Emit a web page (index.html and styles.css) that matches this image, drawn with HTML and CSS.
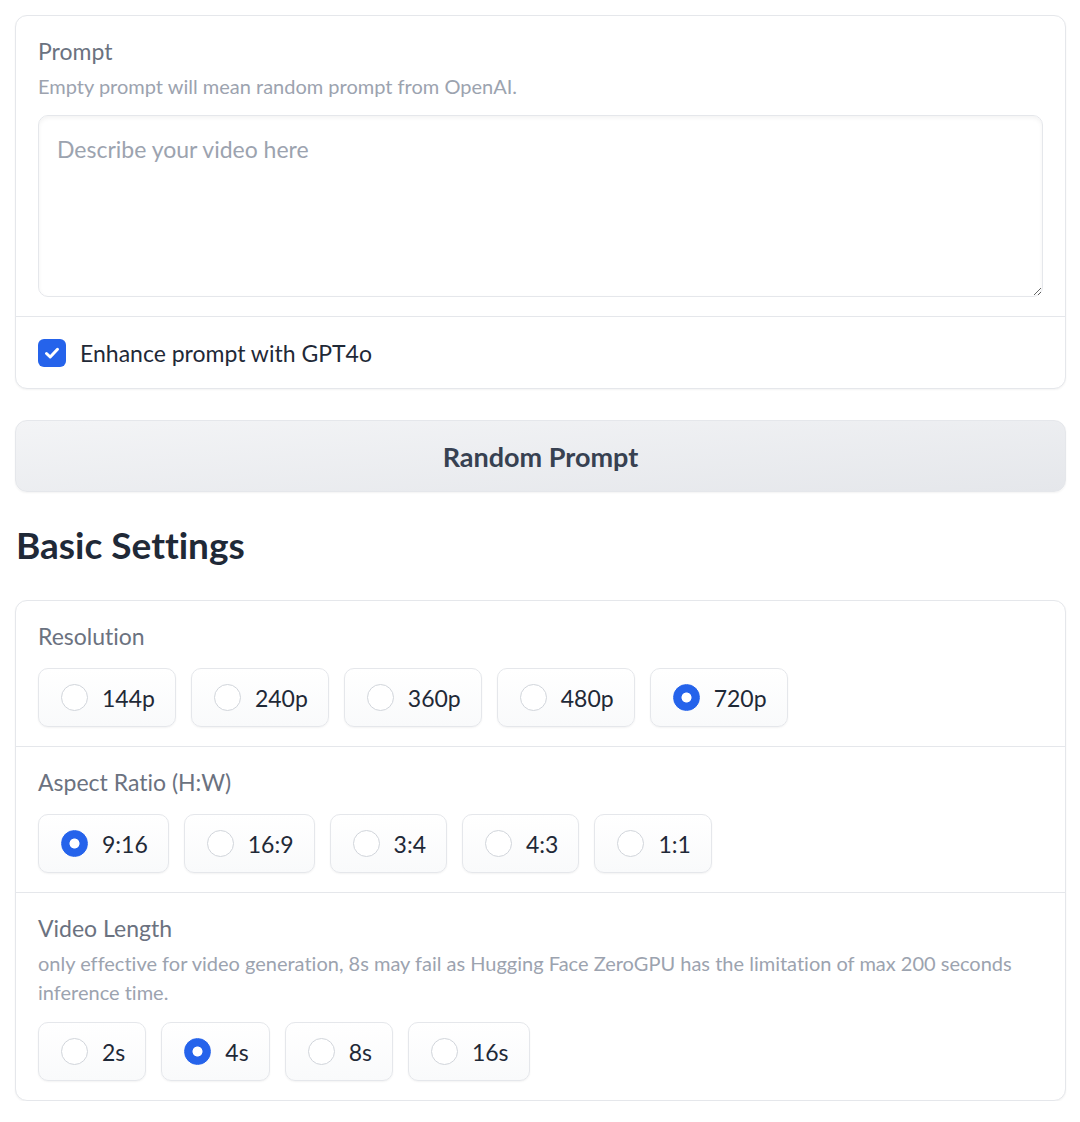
FILE: index.html
```html
<!DOCTYPE html>
<html lang="en">
<head>
<meta charset="utf-8">
<title>Video settings</title>
<link rel="stylesheet" href="styles.css">
</head>
<body>
<div class="page">
  <div class="card">
    <div class="block">
      <div class="label">Prompt</div>
      <div class="info">Empty prompt will mean random prompt from OpenAI.</div>
      <textarea class="prompt-input" placeholder="Describe your video here"></textarea>
    </div>
    <div class="block check-block">
      <label class="check">
        <span class="box">
          <svg width="28" height="28" viewBox="0 0 28 28"><path d="M8.5 14.5 L12.2 18 L19.5 10.3" fill="none" stroke="#fff" stroke-width="3" stroke-linecap="round" stroke-linejoin="round"/></svg>
        </span>
        <span class="check-text">Enhance prompt with GPT4o</span>
      </label>
    </div>
  </div>

  <button class="btn">Random Prompt</button>

  <h2 class="heading">Basic Settings</h2>

  <div class="card">
    <div class="block">
      <div class="label">Resolution</div>
      <div class="options">
        <label class="opt"><span class="radio"></span>144p</label>
        <label class="opt"><span class="radio"></span>240p</label>
        <label class="opt"><span class="radio"></span>360p</label>
        <label class="opt"><span class="radio"></span>480p</label>
        <label class="opt"><span class="radio on"></span>720p</label>
      </div>
    </div>
    <div class="block">
      <div class="label">Aspect Ratio (H:W)</div>
      <div class="options">
        <label class="opt"><span class="radio on"></span>9:16</label>
        <label class="opt"><span class="radio"></span>16:9</label>
        <label class="opt"><span class="radio"></span>3:4</label>
        <label class="opt"><span class="radio"></span>4:3</label>
        <label class="opt"><span class="radio"></span>1:1</label>
      </div>
    </div>
    <div class="block">
      <div class="label">Video Length</div>
      <div class="info">only effective for video generation, 8s may fail as Hugging Face ZeroGPU has the limitation of max 200 seconds inference time.</div>
      <div class="options">
        <label class="opt"><span class="radio"></span>2s</label>
        <label class="opt"><span class="radio on"></span>4s</label>
        <label class="opt"><span class="radio"></span>8s</label>
        <label class="opt"><span class="radio"></span>16s</label>
      </div>
    </div>
  </div>
</div>
</body>
</html>
```

FILE: styles.css
```css
* { box-sizing: border-box; }

html, body {
  margin: 0;
  background: #ffffff;
}

body {
  font-family: "Lato", "Open Sans", sans-serif;
  font-variant-ligatures: none;
  color: #1f2937;
}

.page {
  padding: 15px 14px 0 15px;
  display: flex;
  flex-direction: column;
}

.card {
  border: 1px solid #e5e7eb;
  border-radius: 12px;
  box-shadow: 0 1px 2px rgba(0, 0, 0, 0.05);
  background: #fff;
  overflow: hidden;
}

.block {
  padding: 18px 22px 19px 22px;
  display: flex;
  flex-direction: column;
}

.block + .block {
  border-top: 1px solid #e5e7eb;
}

.label {
  font-size: 23px;
  line-height: 34px;
  color: #6b7280;
}

.info {
  font-size: 20px;
  line-height: 29px;
  color: #9ca3af;
  margin-top: 4px;
}

.prompt-input {
  display: block;
  width: 100%;
  height: 182px;
  margin: 14px 0 0 0;
  padding: 16px 18px;
  border: 1px solid #e5e7eb;
  border-radius: 10px;
  box-shadow: inset 0 2px 4px rgba(0, 0, 0, 0.05);
  font-family: inherit;
  font-size: 23px;
  line-height: 34px;
  color: #1f2937;
  resize: vertical;
  outline: none;
}

.prompt-input::placeholder {
  color: #9ca3af;
}

.check-block {
  padding: 18px 22px 18px 22px;
}

.check {
  display: flex;
  align-items: center;
  height: 35px;
  gap: 14px;
}

.box {
  width: 28px;
  height: 28px;
  border-radius: 6px;
  background: #2563eb;
  display: flex;
}

.check-text {
  font-size: 23px;
  line-height: 34px;
  color: #1f2937;
}

.btn {
  margin-top: 31px;
  height: 72px;
  width: 100%;
  border: 1px solid #e5e7eb;
  border-radius: 12px;
  background: linear-gradient(to bottom right, #f3f4f6, #e5e7eb);
  box-shadow: 0 1px 2px rgba(0, 0, 0, 0.05);
  font-family: inherit;
  font-size: 27px;
  font-weight: 700;
  color: #374151;
}

.heading {
  margin: 31px 0 33px 1px;
  font-size: 37px;
  line-height: 44px;
  font-weight: 700;
  color: #1f2937;
}

.options {
  margin-top: 15px;
  display: flex;
  flex-wrap: wrap;
  gap: 15px;
}

.opt {
  height: 59px;
  display: flex;
  align-items: center;
  gap: 14px;
  padding: 0 20px 0 22px;
  border: 1px solid #e5e7eb;
  border-radius: 10px;
  background: linear-gradient(to top, #f9fafb, #ffffff);
  box-shadow: 0 1px 2px rgba(0, 0, 0, 0.05);
  font-size: 23px;
  color: #1f2937;
}

.radio {
  width: 27px;
  height: 27px;
  border-radius: 50%;
  border: 1px solid #d1d5db;
  background: #fff;
  flex: none;
}

.radio.on {
  border-color: #2563eb;
  background: radial-gradient(circle, #ffffff 0 4.6px, #2563eb 5.4px);
}
```
